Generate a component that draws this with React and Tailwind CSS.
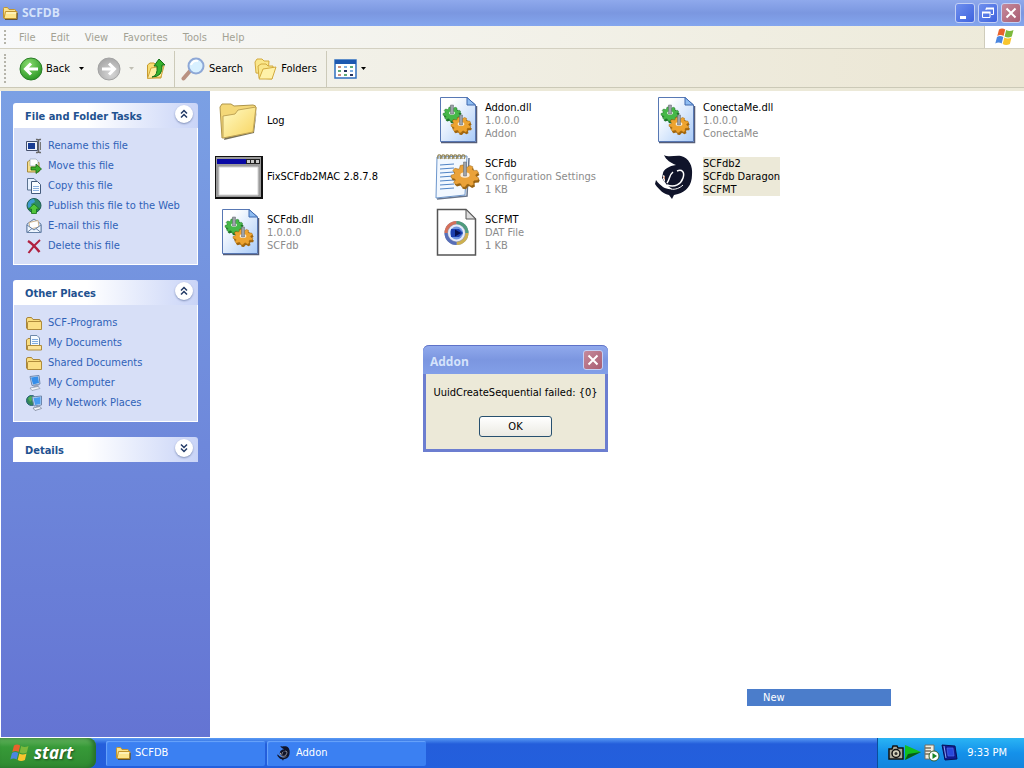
import { useId } from 'react';

function FolderIcon({ className }) {
  return (
    <svg viewBox="0 0 16 16" className={className} aria-hidden="true">
      <path d="M1.500 13V3.500Q1.500 2.500 2.500 2.500H5.500L7 4.500H12.500Q13.500 4.500 13.500 5.500V7" fill="#fbe28a" stroke="#c2952e" />
      <path d="M2 13.500L3.500 6.500H15L14.500 13.500Z" fill="#fde58c" stroke="#c2952e" strokeLinejoin="round" />
      <path d="M4 8H14" stroke="#fffbe0" />
      <path d="M3 14.500H15.200V8" fill="none" stroke="#5c4310" strokeWidth="0.800" />
    </svg>
  );
}

function WindowsFlag({ className }) {
  return (
    <svg viewBox="0 0 20 20" className={className} aria-hidden="true">
      <path d="M4 2.500Q7 .5 10.200 2.500L8.600 9Q5.500 7 2.300 9Z" fill="#e8622c" />
      <path d="M11.200 3Q14.500 5 18.500 3L16.800 9.500Q13 11.500 9.600 9.500Z" fill="#7cb93c" />
      <path d="M2 10Q5 8 8.300 10L6.700 16.500Q3.500 14.500 .3 16.500Z" fill="#4a86e0" />
      <path d="M9.300 10.500Q12.800 12.500 16.500 10.500L14.900 17Q11 19 7.700 17Z" fill="#f8c52e" />
    </svg>
  );
}

function DragonIcon({ className }) {
  return (
    <svg viewBox="0 0 40 48" className={className} aria-hidden="true">
      <path
        d="M9 3C14 6 20 3 26 4C34 6 38 14 37 23C37 33 31 40 23 42L19 43L17 47L14 43C9 42 4 38 0 32L1 28C6 35 12 38 17 37L12 33L9 29L7 26L8 21C9 17 14 14 21 13C16 11 11 8 9 3Z"
        fill="#10142a"
      />
      <path d="M12 31C15 27 14 23 18 20M22 19C27 17 30 20 28 26C26 32 20 36 12 33" fill="none" stroke="#fff" strokeWidth="1.500" />
      <path d="M19 25L24 29L16 29Z" fill="#10142a" />
      <path d="M8 23L10 24V30L8 27Z" fill="#fff" />
      <path d="M8 25L10 24V28Z" fill="#c98a70" />
      <path d="M16 37C20 38 25 36 28 33" fill="none" stroke="#fff" />
    </svg>
  );
}

// outline of a tilted cog, squashed vertically so that it looks like lying flat
function cogPath(r, teeth = 9) {
  const points = [];
  for (let i = 0; i < teeth; i++) {
    [
      [0, 0.78],
      [0.25, 1],
      [0.6, 1],
      [0.8, 0.78],
    ].forEach(([t, k]) => {
      const a = ((i + t) / teeth) * Math.PI * 2;
      points.push(`${(Math.cos(a) * r * k).toFixed(2)} ${(Math.sin(a) * r * k * 0.8).toFixed(2)}`);
    });
  }
  return `M${points.join('L')}Z`;
}

function Gear({ x, y, r, fill, stroke }) {
  const d = cogPath(r);
  return (
    <g transform={`translate(${x} ${y})`}>
      <path d={d} transform="translate(1 2)" fill={stroke} />
      <path d={d} fill={fill} stroke={stroke} strokeWidth="0.500" />
      <ellipse cy="-1" rx={r / 3} ry={r / 5} fill="#fff" opacity="0.800" />
      <path d={`M-1.500 0V${-r}H1.500V0Z`} fill="#9da2a9" stroke="#60666e" strokeWidth="0.500" />
    </g>
  );
}

function BigFolder() {
  const id = useId();
  return (
    <svg viewBox="0 0 48 48" className="size-12" aria-hidden="true">
      <linearGradient id={id} x1="0" y1="0" x2="1" y2="1">
        <stop offset="0" stopColor="#fffbc4" />
        <stop offset="1" stopColor="#f7d35e" />
      </linearGradient>
      <path d="M9 44L39 37L42 13L38 36L10 40Z" fill="#77715a" />
      <path d="M5 11L7 8H16L19 10L38 9Q41 9 41 12L38 36L7 42Z" fill="#f4d878" stroke="#b0964a" />
      <path d="M8 20L20 18L23 14L41 11L38 36L8 42Z" fill={`url(#${id})`} stroke="#c0a456" />
    </svg>
  );
}

function ProgramIcon() {
  return (
    <svg viewBox="0 0 48 48" className="size-12" aria-hidden="true">
      <path d="M0 4H48V47H0Z" fill="#111" />
      <path d="M1 5H46V45H1Z" fill="#9a9a9a" />
      <path d="M2 7H45V12H2Z" fill="#0808a4" />
      <path d="M31 7H45V12H31Z" fill="#222" />
      <path d="M32 8H35V11H32ZM36 8H39V11H36ZM41 8H44V11H41Z" fill="#c9c9c9" />
      <path d="M4 15H43V43H4Z" fill="#fff" stroke="#d3d3d3" />
    </svg>
  );
}

function DllIcon() {
  const id = useId();
  return (
    <svg viewBox="0 0 48 48" className="size-12" aria-hidden="true">
      <linearGradient id={id} x1="0" y1="0" x2="1" y2="1">
        <stop offset="0.200" stopColor="#fff" />
        <stop offset="1" stopColor="#a9cbf8" />
      </linearGradient>
      <path d="M8 46.500H43.500V10" fill="none" stroke="#555d78" strokeWidth="1.500" />
      <path d="M7.500 1.500H34L42.500 9V45.500H7.500Z" fill={`url(#${id})`} stroke="#5878b4" />
      <path d="M34 1.500V9H42.500Z" fill="#8fbdf2" stroke="#3f68ae" />
      <Gear x={19} y={18} r={9} fill="#46b848" stroke="#20752a" />
      <Gear x={28} y={29} r={10} fill="#eda32f" stroke="#a1660f" />
    </svg>
  );
}

function ConfigIcon() {
  const spiral = [6, 10, 14, 18, 22, 26, 30];
  const lines = [13, 17, 21, 25, 29, 33, 37];
  return (
    <svg viewBox="0 0 48 48" className="size-12" aria-hidden="true">
      <path d="M4 47L34 44L36 6" fill="none" stroke="#68758c" strokeWidth="1.500" />
      <path d="M4 5L34 4L32 43L3 46Z" fill="#f2f8ff" stroke="#6c96cc" />
      {spiral.map((x) => (
        <path key={x} d={`M${x - 1} 7Q${x - 2} 2 ${x + 1} 3Q${x + 3} 4 ${x + 1} 7`} fill="none" stroke="#8f8050" strokeWidth="1.200" />
      ))}
      {lines.map((y) => (
        <path key={y} d={`M7 ${y}L21 ${y - 1}`} stroke="#5083c4" />
      ))}
      <Gear x={32} y={24} r={14} fill="#eaa239" stroke="#9a6413" />
    </svg>
  );
}

function MediaIcon() {
  return (
    <svg viewBox="0 0 48 48" className="size-12" aria-hidden="true">
      <path d="M4.500 1.500H33L42.500 11V47H4.500Z" fill="#fff" stroke="#555" strokeWidth="1.500" />
      <path d="M33 1.500V11H42.500Z" fill="#ddd" stroke="#555" />
      <circle cx="23.500" cy="25" r="12" fill="#8e97b5" />
      <g fill="none" strokeWidth="3">
        <path d="M13 25A10.500 10.500 0 0 1 23.500 14.500" stroke="#d4705a" />
        <path d="M23.500 14.500A10.500 10.500 0 0 1 34 25" stroke="#4f9c7c" />
        <path d="M34 25A10.500 10.500 0 0 1 23.500 35.500" stroke="#cdb050" />
        <path d="M23.500 35.500A10.500 10.500 0 0 1 13 25" stroke="#586fb8" />
      </g>
      <circle cx="23.500" cy="25" r="8.500" fill="#e6ebfa" />
      <circle cx="23.500" cy="25" r="6.500" fill="#6f95e0" />
      <path d="M18 21H26L30 25L26 29H18Z" fill="#1b3fae" />
      <path d="M22 21.500L28 25L22 28.500Z" fill="#06104f" />
    </svg>
  );
}

const taskIcons = {
  rename: (
    <>
      <path d="M.5 3.500H11.500V12.500H.5Z" fill="#eef2fb" stroke="#44506c" />
      <path d="M2 5H9V11H2Z" fill="#183c94" />
      <path d="M10 1.500Q12.500 1 12.500 3V13Q12.500 15 10 14.500M15 1.500Q12.500 1 12.500 3M15 14.500Q12.500 15 12.500 13" fill="none" stroke="#666" strokeWidth="1.500" />
      <path d="M14.500 4V12" stroke="#777" />
    </>
  ),
  move: (
    <>
      <path d="M1.500 14V4L3 2.500H6L7.500 4.500H13V14Z" fill="#f7df88" stroke="#a58a3d" />
      <path d="M4 1H10L12 3V8H4Z" fill="#fff" stroke="#9aa7b7" strokeWidth="0.700" />
      <path d="M5 12V9H10V6L15.500 11L10 15.500V12Z" fill="#3cae2c" stroke="#14650f" strokeWidth="0.800" />
    </>
  ),
  copy: (
    <>
      <path d="M1.500 .5H8L10.500 3V12H1.500Z" fill="#e7f1ff" stroke="#5b7391" />
      <path d="M5.500 3.500H11.500L14.500 6.500V15.500H5.500Z" fill="#f9fcff" stroke="#435a7b" />
      <path d="M7 8.500H13M7 10.500H13M7 12.500H13" stroke="#8ab0df" />
    </>
  ),
  publish: (
    <>
      <circle cx="8" cy="7.500" r="7" fill="#2f8b62" stroke="#1f5c55" />
      <path d="M2 5Q4 1 8 1L9 4L5 6L6 9L3 11Q1 8 2 5Z" fill="#3f9ad0" />
      <path d="M8 6L13.500 11H10.500V15.500H5.500V11H2.500Z" fill="#51c53b" stroke="#157316" strokeWidth="0.800" />
    </>
  ),
  mail: (
    <>
      <path d="M1 6L8 1L15 6V14.500H1Z" fill="#d7e7fa" stroke="#6681a6" />
      <path d="M3 4.500L12 2.500L13 9L4 11Z" fill="#fff" stroke="#c59c62" strokeWidth="0.700" />
      <path d="M1 7L8 12L15 7V14.500H1Z" fill="#eff6ff" stroke="#6681a6" />
      <path d="M1 14.500L6 10.500M15 14.500L10 10.500" stroke="#6681a6" />
    </>
  ),
  remove: (
    <>
      <path d="M2 3Q7 6 13.500 14" fill="none" stroke="#b0203f" strokeWidth="2.500" />
      <path d="M14 2Q8 7 2.500 15" fill="none" stroke="#b0203f" strokeWidth="2" />
    </>
  ),
  folder: (
    <>
      <path d="M.5 13.500V4Q.5 2.500 2 2.500H5.500L7 4.500H13Q14.500 4.500 14.500 6V8" fill="#f9dd80" stroke="#a8843c" />
      <path d="M1.500 14.500V7.500Q1.500 6.500 3 6.500H15.500V14.500Z" fill="#fbdf84" stroke="#b08c3b" />
    </>
  ),
  documents: (
    <>
      <path d="M.5 14.500V5L2 3.500H5V14.500Z" fill="#f9dd80" stroke="#a8843c" />
      <path d="M4.500 .5H11L13.500 3V11H4.500Z" fill="#f5faff" stroke="#6c88aa" />
      <path d="M6 4.500H12M6 6.500H12M6 8.500H12" stroke="#80acdf" />
      <path d="M1.500 15V10.500H15.500V15Z" fill="#fde49a" stroke="#b08c3b" />
    </>
  ),
  computer: (
    <>
      <path d="M4 1.500L13 .5L14 9L6 10.500Z" fill="#cfe0f5" stroke="#6d86ad" />
      <path d="M5 2.500L12 1.500L13 8L7 9.500Z" fill="#358ee9" />
      <path d="M8 10L12 9L13 12L7 13Z" fill="#97a5bd" />
      <path d="M4 13L12 11.500L14 13.500L6 15.500Z" fill="#f4f6fa" stroke="#8793a7" strokeWidth="0.700" />
    </>
  ),
  network: (
    <>
      <circle cx="5.500" cy="5.500" r="5" fill="#35865b" stroke="#255f78" />
      <path d="M2 3L5 1L7 4L4 7Z" fill="#4fae58" />
      <path d="M6 2L15.500 1V10L8 11Z" fill="#cfe0f5" stroke="#6d86ad" />
      <path d="M7.500 3L14.500 2V9L9 10Z" fill="#499cf0" />
      <path d="M10 11L13 10V12H10Z" fill="#97a5bd" />
      <path d="M7 13L14 11.500L15.500 13.500L9 15.500Z" fill="#f4f6fa" stroke="#7c879b" strokeWidth="0.800" />
    </>
  ),
};

const fileTasks = [
  { icon: 'rename', label: 'Rename this file' },
  { icon: 'move', label: 'Move this file' },
  { icon: 'copy', label: 'Copy this file' },
  { icon: 'publish', label: 'Publish this file to the Web' },
  { icon: 'mail', label: 'E-mail this file' },
  { icon: 'remove', label: 'Delete this file' },
];

const places = [
  { icon: 'folder', label: 'SCF-Programs' },
  { icon: 'documents', label: 'My Documents' },
  { icon: 'folder', label: 'Shared Documents' },
  { icon: 'computer', label: 'My Computer' },
  { icon: 'network', label: 'My Network Places' },
];

const files = [
  { name: 'Log', icon: <BigFolder /> },
  { name: 'Addon.dll', info: ['1.0.0.0', 'Addon'], icon: <DllIcon /> },
  { name: 'ConectaMe.dll', info: ['1.0.0.0', 'ConectaMe'], icon: <DllIcon /> },
  { name: 'FixSCFdb2MAC 2.8.7.8', icon: <ProgramIcon /> },
  { name: 'SCFdb', info: ['Configuration Settings', '1 KB'], icon: <ConfigIcon /> },
  {
    name: 'SCFdb2',
    info: ['SCFdb Daragon', 'SCFMT'],
    icon: <DragonIcon className="h-12 w-10" />,
    selected: true,
  },
  { name: 'SCFdb.dll', info: ['1.0.0.0', 'SCFdb'], icon: <DllIcon /> },
  { name: 'SCFMT', info: ['DAT File', '1 KB'], icon: <MediaIcon /> },
];

const menus = ['File', 'Edit', 'View', 'Favorites', 'Tools', 'Help'];

function CaptionButton({ label, danger, children }) {
  return (
    <button
      aria-label={label}
      className={`size-5 rounded-[3px] border border-[#c3d0f5] ${
        danger
          ? 'bg-linear-to-br from-[#c58a9c] to-[#a95d72]'
          : 'bg-linear-to-br from-[#6f8fee] to-[#3f62de]'
      }`}
    >
      <svg viewBox="0 0 18 18" className="size-full" fill="none" stroke="#fff">
        {children}
      </svg>
    </button>
  );
}

function CloseGlyph() {
  return <path d="M4.500 4.500L13.500 13.500M13.500 4.500L4.500 13.500" strokeWidth="2" />;
}

function TitleBar() {
  return (
    <header className="flex h-[26px] items-center bg-linear-to-b from-[#8fa9ec] via-[#7b97e0] to-[#84a6ee] pr-[3px] pl-[2px]">
      <FolderIcon className="size-4" />
      <h1 className="ml-1 flex-1 font-[Open_Sans,sans-serif] text-[12px] font-bold text-[#d5e3fb]">SCFDB</h1>
      <div className="flex gap-[3px]">
        <CaptionButton label="Minimize">
          <path d="M4 13.500H10" strokeWidth="3" />
        </CaptionButton>
        <CaptionButton label="Restore">
          <path d="M7 6V4.500H14.500V10.500H12M3.500 8.500H11V13.500H3.500Z" />
          <path d="M7 4.500H15M3 8.500H11.500" strokeWidth="2" />
        </CaptionButton>
        <CaptionButton label="Close" danger>
          <CloseGlyph />
        </CaptionButton>
      </div>
    </header>
  );
}

function Grip() {
  return <div className="my-1 w-0 self-stretch border-l-2 border-dotted border-[#b5b4aa]" />;
}

function MenuBar() {
  return (
    <nav className="flex h-[23px] border-b border-[#d3d0c1] bg-linear-to-r from-[#f8f9fa] to-[#edead9] pl-1">
      <Grip />
      <div className="flex flex-1 items-center gap-[15px] pt-[2px] pl-[13px] text-[#a3a294]">
        {menus.map((m) => (
          <button key={m}>{m}</button>
        ))}
      </div>
      <div className="flex w-10 items-center justify-center border-l border-[#cfccbb] bg-white">
        <WindowsFlag className="size-5" />
      </div>
    </nav>
  );
}

function Caret({ className }) {
  return (
    <svg viewBox="0 0 5 3" className={`h-[3px] w-[5px] ${className ?? ''}`} aria-hidden="true">
      <path d="M0 0H5L2.500 3Z" fill="currentColor" />
    </svg>
  );
}

function ArrowBall({ forward }) {
  const id = useId();
  return (
    <svg viewBox="0 0 24 24" className={forward ? 'size-6 rotate-180' : 'size-6'} aria-hidden="true">
      <radialGradient id={id} cx="0.4" cy="0.3" r="0.8">
        <stop offset="0" stopColor={forward ? '#d8d8d8' : '#8bdc70'} />
        <stop offset="1" stopColor={forward ? '#a0a0a0' : '#1f8f1c'} />
      </radialGradient>
      <circle cx="12" cy="12" r="11" fill={`url(#${id})`} stroke={forward ? '#a3a3a3' : '#2b7d28'} />
      <path d="M19 12H7M12 6.500L6.500 12L12 17.500" fill="none" stroke="#fff" strokeWidth="3" />
    </svg>
  );
}

function ToolBar() {
  return (
    <div className="flex h-[39px] items-center border-b border-[#cbc9b7] bg-linear-to-r from-[#f5f6f3] to-[#ebe6d3] pt-px pl-1">
      <Grip />
      <button className="ml-[13px] flex items-center">
        <ArrowBall />
        <span className="ml-[3px] w-[33px] text-left">Back</span>
        <Caret />
      </button>
      <button className="ml-[13px] flex items-center text-[#c0bfb4]" aria-label="Forward" disabled>
        <ArrowBall forward />
        <Caret className="ml-2" />
      </button>
      <button className="ml-3" aria-label="Up">
        <svg viewBox="0 0 20 24" className="h-6 w-5">
          <path d="M1.500 21V8L4 6H8L10 8H16L15 21Z" fill="#f7dc72" stroke="#c69a2e" />
          <path d="M1.500 21.500L5 11L18 9L15 20Z" fill="#fdeda1" stroke="#d2a63e" />
          <path d="M6 20Q12 19 11 9H8L13 2L19 8H16Q17 20 6 20Z" fill="#36b12c" stroke="#167019" />
        </svg>
      </button>
      <div className="ml-2 h-9 border-l border-[#cccab9]" />
      <button className="ml-[6px] flex items-center">
        <svg viewBox="0 0 24 24" className="size-6" aria-hidden="true">
          <path d="M2.500 21.500L9 14" stroke="#b99181" strokeWidth="4" strokeLinecap="round" />
          <circle cx="15" cy="9" r="7.500" fill="#d8f0ff" stroke="#8ea8d6" strokeWidth="2" />
          <path d="M10 8Q12 3 17 4" stroke="#fff" strokeWidth="2" fill="none" />
        </svg>
        <span className="ml-1 w-[33px]">Search</span>
      </button>
      <button className="ml-3 flex items-center">
        <svg viewBox="0 0 24 24" className="size-6" aria-hidden="true">
          <path d="M2 16L1 5L3 2H8L10 4H15L14 17Z" fill="#fae78b" stroke="#d2aa3e" />
          <path d="M5 21L4 9L7 7H12L14 9H19L18 22Z" fill="#fae78b" stroke="#d2aa3e" />
          <path d="M5 22L9 12L22 10L18 22Z" fill="#fff1a8" stroke="#d2aa3e" />
        </svg>
        <span className="ml-[3px] w-9">Folders</span>
      </button>
      <div className="ml-[9px] h-9 border-l border-[#cccab9]" />
      <button className="ml-[7px] flex items-center" aria-label="Views">
        <svg viewBox="0 0 23 20" className="h-5 w-[23px]">
          <path d="M1 1H22V19H1Z" fill="#fff" stroke="#2f6fc0" strokeWidth="1.500" />
          <path d="M1 1H22V5H1Z" fill="#1d58b0" />
          <path d="M4 7H7V9H4ZM4 15H7V17H4Z" fill="#c98f7f" />
          <path d="M10 7H13V9H10ZM16 11H19V13H16Z" fill="#7fb0e3" />
          <path d="M4 11H7V13H4ZM16 7H19V9H16ZM10 15H13V17H10Z" fill="#5fab78" />
          <path d="M10 11H13V13H10ZM16 15H19V17H16Z" fill="#26345e" />
        </svg>
        <Caret className="ml-1" />
      </button>
    </div>
  );
}

function TaskPanel({ title, items }) {
  return (
    <section className="text-[#2f62b8]">
      <div className="flex h-[25px] items-center justify-between rounded-t-[3px] bg-linear-to-r from-white from-40% to-[#c9d4f7] pr-[5px] pl-3">
        <h2 className="pt-[2px] font-bold text-[#1f5290]">{title}</h2>
        <button
          aria-label={`Toggle ${title}`}
          className="mb-[3px] size-[18px] rounded-full bg-white shadow-[0_1px_2px_#8090b8]"
        >
          <svg
            viewBox="0 0 18 18"
            className={items ? 'size-full' : 'size-full rotate-180'}
            fill="none"
            stroke="#223a66"
            strokeWidth="1.500"
          >
            <path d="M6 8.500L9 5.500L12 8.500M6 12.500L9 9.500L12 12.500" />
          </svg>
        </button>
      </div>
      {items && (
        <ul className="border border-t-0 border-white bg-[#d7dff7] pt-2 pb-2 pl-3">
          {items.map((item) => (
            <li key={item.label} className="flex h-5 items-center">
              <a href="#" className="flex items-center gap-[6px]">
                <svg viewBox="0 0 16 16" className="size-4" aria-hidden="true">
                  {taskIcons[item.icon]}
                </svg>
                {item.label}
              </a>
            </li>
          ))}
        </ul>
      )}
    </section>
  );
}

function FileTile({ file }) {
  return (
    <li className="flex h-14 items-center gap-1">
      <div className="flex w-12 shrink-0 justify-center">{file.icon}</div>
      <div className={`leading-[13px] ${file.selected ? 'bg-[#ece9d8]' : 'text-[#8b8b8b]'}`}>
        <p className="text-black">{file.name}</p>
        {file.info?.map((line) => (
          <p key={line} className={file.selected ? 'text-black' : ''}>
            {line}
          </p>
        ))}
      </div>
    </li>
  );
}

function AddonDialog() {
  return (
    <div
      role="dialog"
      aria-labelledby="dialog-title"
      className="absolute top-[345px] left-[423px] w-[185px] rounded-t-[6px] border-3 border-t-0 border-[#6c7ed0] bg-[#ece9d8]"
    >
      <div className="-mx-[3px] flex h-[29px] items-center justify-between rounded-t-[6px] border-t border-[#5e72c8] bg-linear-to-b from-[#90a9ec] via-[#7b96e0] to-[#829fe8] pr-[5px] pl-[7px]">
        <h2 id="dialog-title" className="pt-1 font-[Open_Sans,sans-serif] text-[12px] font-bold text-[#d5e3fb]">
          Addon
        </h2>
        <CaptionButton label="Close dialog" danger>
          <CloseGlyph />
        </CaptionButton>
      </div>
      <div className="flex flex-col items-center px-2 pt-[11px] pb-3">
        <p className="leading-4 whitespace-nowrap">UuidCreateSequential failed: {'{0}'}</p>
        <button className="mt-[15px] h-[21px] w-[73px] rounded-[3px] border border-[#27506f] bg-linear-to-b from-white to-[#ebeae2]">
          OK
        </button>
      </div>
    </div>
  );
}

function TaskbarButton({ icon, label }) {
  return (
    <button className="flex h-[25px] w-[159px] items-center gap-1 rounded-[2px] bg-[#3b80f2] pl-[9px] text-white shadow-[inset_1px_1px_1px_#6ba5fb]">
      {icon}
      {label}
    </button>
  );
}

function Tray() {
  return (
    <div className="flex items-center border-l border-[#0a4f9c] bg-linear-to-b from-[#2ab4f4] via-[#1491ea] to-[#1485dd] pr-[17px] pl-[10px] text-white">
      <svg viewBox="0 0 70 18" className="mr-[9px] h-[18px] w-[70px]" aria-hidden="true">
        <path d="M1 5H4L5 2H9L10 4H15V15H1Z" fill="#aaa99b" stroke="#111" strokeWidth="1.500" />
        <circle cx="8" cy="9.500" r="4" fill="#d2d0bb" stroke="#111" strokeWidth="1.500" />
        <circle cx="8" cy="9.500" r="1.500" fill="#333" />
        <path d="M17 1L33 8L17 16Z" fill="#11bf20" />
        <path d="M17 16L20 10L33 8Z" fill="#075b19" />
        <path d="M37 1H46V15H37Z" fill="#f1eedf" stroke="#746f65" />
        <path d="M37 4H43M37 7H43M37 10H43" stroke="#77705f" strokeWidth="1.500" />
        <circle cx="46" cy="12" r="5" fill="#fff" stroke="#315e2a" />
        <path d="M44.500 9L49 12L44.500 15Z" fill="#168323" />
        <path d="M54 1L67 2L69 15L57 16Z" fill="#101a92" stroke="#061158" />
        <path d="M56 2L58 14" stroke="#8ea6ec" />
        <path d="M59 4H65L66 12H60Z" fill="#2847dc" stroke="#4b6be6" strokeWidth="0.700" />
      </svg>
      <time>9:33 PM</time>
    </div>
  );
}

function Taskbar() {
  return (
    <footer className="flex h-[30px] bg-linear-to-b from-[#5a9af4] via-[#245edb] via-20% to-[#235fdd]">
      <button className="flex w-24 items-center gap-1 rounded-r-[8px] bg-linear-to-b from-[#63b35f] via-[#379a38] via-30% to-[#2f8a31] pl-[10px] shadow-[inset_-3px_0_4px_#276f2b]">
        <WindowsFlag className="size-5" />
        <span className="font-[Open_Sans,sans-serif] text-[17px] font-bold text-white italic [text-shadow:1px_1px_2px_#1d4d1f]">
          start
        </span>
      </button>
      <div className="flex flex-1 items-center gap-[2px] pl-[10px]">
        <TaskbarButton icon={<FolderIcon className="size-4" />} label="SCFDB" />
        <TaskbarButton icon={<DragonIcon className="h-4 w-4" />} label="Addon" />
      </div>
      <Tray />
    </footer>
  );
}

export default function App() {
  return (
    <div className="relative flex min-h-screen flex-col bg-white font-[DejaVu_Sans_Condensed,Noto_Sans,sans-serif] text-[11px] leading-4 text-black">
      <TitleBar />
      <MenuBar />
      <ToolBar />
      <div className="flex flex-1 border-t-3 border-[#ece9d8]">
        <aside className="mb-px ml-px flex w-[209px] flex-col gap-[15px] bg-linear-to-b from-[#7ba0e4] to-[#6474d3] p-3">
          <TaskPanel title="File and Folder Tasks" items={fileTasks} />
          <TaskPanel title="Other Places" items={places} />
          <TaskPanel title="Details" />
        </aside>
        <main className="flex-1 pt-px pl-[5px]">
          <ul className="grid grid-cols-[repeat(auto-fill,218px)]">
            {files.map((file) => (
              <FileTile key={file.name} file={file} />
            ))}
          </ul>
        </main>
      </div>
      <Taskbar />
      <AddonDialog />
      <button className="absolute top-[689px] left-[747px] h-[17px] w-36 bg-[#4b7dcb] pl-4 text-left text-white">
        New
      </button>
    </div>
  );
}
